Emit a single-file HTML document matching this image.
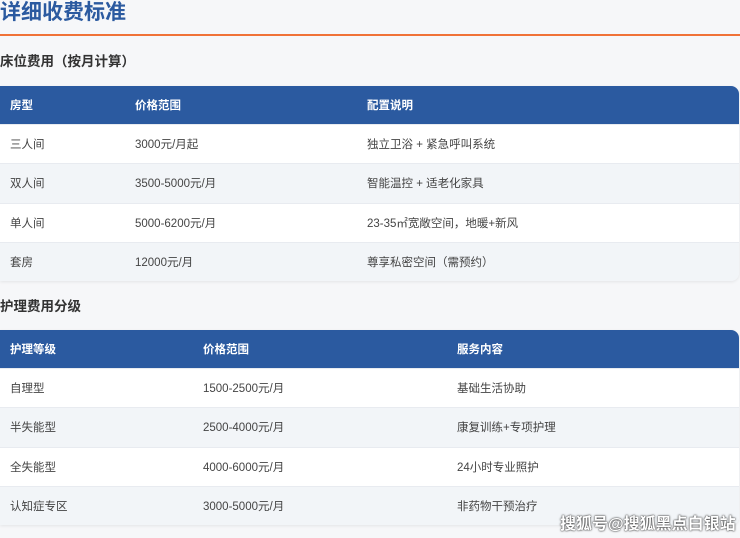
<!DOCTYPE html>
<html><head><meta charset="utf-8"><style>
*{margin:0;padding:0;box-sizing:border-box}
body{width:740px;height:538px;overflow:hidden;background:#f6f7f9;font-family:"Liberation Sans","Noto Sans CJK SC",sans-serif;position:relative}
.t{position:absolute;left:0;top:0;font-size:21px;font-weight:bold;color:#2b5aa0;line-height:26px}
.line{position:absolute;left:0;top:34px;width:740px;height:2px;background:#f07238}
h3{position:absolute;left:0;font-size:13.5px;font-weight:bold;color:#333;line-height:18px}
table{position:absolute;left:0;width:739px;border-collapse:separate;border-spacing:0;border-radius:0 8px 8px 0;overflow:hidden;box-shadow:0 1px 3px rgba(0,0,0,.08);font-size:11.5px;color:#444}
th{background:#2b5aa0;color:#fff;text-align:left;font-weight:bold;height:38px;padding-left:10px}
td{height:39.3px;padding-left:10px;border-top:1px solid #e8ebf0}
tr:nth-child(even) td{background:#f2f5f8}
tr:nth-child(odd) td{background:#fff}
.wm{position:absolute;left:560px;top:510px;font-size:16px;font-weight:bold;color:#fff;text-shadow:0 0 2px #333,0 0 1px #333}
</style></head><body>
<div class="t">详细收费标准</div>
<div class="line"></div>
<h3 style="top:53px">床位费用（按月计算）</h3>
<table style="top:86px"><thead><tr><th style="width:125px">房型</th><th style="width:232px">价格范围</th><th>配置说明</th></tr></thead>
<tbody><tr><td>三人间</td><td>3000元/月起</td><td>独立卫浴 + 紧急呼叫系统</td></tr>
<tr><td>双人间</td><td>3500-5000元/月</td><td>智能温控 + 适老化家具</td></tr>
<tr><td>单人间</td><td>5000-6200元/月</td><td>23-35㎡宽敞空间，地暖+新风</td></tr>
<tr><td>套房</td><td>12000元/月</td><td>尊享私密空间（需预约）</td></tr></tbody></table>
<h3 style="top:298px">护理费用分级</h3>
<table style="top:330px"><thead><tr><th style="width:193px">护理等级</th><th style="width:254px">价格范围</th><th>服务内容</th></tr></thead>
<tbody><tr><td>自理型</td><td>1500-2500元/月</td><td>基础生活协助</td></tr>
<tr><td>半失能型</td><td>2500-4000元/月</td><td>康复训练+专项护理</td></tr>
<tr><td>全失能型</td><td>4000-6000元/月</td><td>24小时专业照护</td></tr>
<tr><td>认知症专区</td><td>3000-5000元/月</td><td>非药物干预治疗</td></tr></tbody></table>
<div class="wm">搜狐号@搜狐黑点白银站</div>
</body></html>
